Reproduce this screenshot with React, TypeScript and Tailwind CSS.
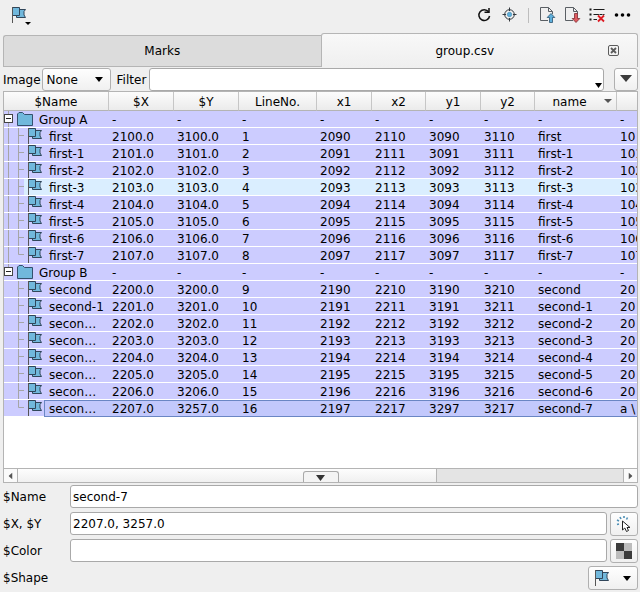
import { useState } from 'react';
import clsx from 'clsx';

type Mark = {
  name: string;
  cells: string[];
  state?: 'hover' | 'current';
};

type Group = {
  name: string;
  marks: Mark[];
};

const columns = [
  { label: '$Name', width: 'w-[105px]' },
  { label: '$X', width: 'w-[65px]' },
  { label: '$Y', width: 'w-[65px]' },
  { label: 'LineNo.', width: 'w-[78px]' },
  { label: 'x1', width: 'w-[55px]' },
  { label: 'x2', width: 'w-[54px]' },
  { label: 'y1', width: 'w-[55px]' },
  { label: 'y2', width: 'w-[54px]' },
  { label: 'name', width: 'w-[82px]', sorted: true },
  { label: '', width: '' },
];

const groups: Group[] = [
  {
    name: 'Group A',
    marks: [
      { name: 'first', cells: ['2100.0', '3100.0', '1', '2090', '2110', '3090', '3110', 'first', '10'] },
      { name: 'first-1', cells: ['2101.0', '3101.0', '2', '2091', '2111', '3091', '3111', 'first-1', '101'] },
      { name: 'first-2', cells: ['2102.0', '3102.0', '3', '2092', '2112', '3092', '3112', 'first-2', '102'] },
      { name: 'first-3', cells: ['2103.0', '3103.0', '4', '2093', '2113', '3093', '3113', 'first-3', '103'], state: 'hover' },
      { name: 'first-4', cells: ['2104.0', '3104.0', '5', '2094', '2114', '3094', '3114', 'first-4', '104'] },
      { name: 'first-5', cells: ['2105.0', '3105.0', '6', '2095', '2115', '3095', '3115', 'first-5', '105'] },
      { name: 'first-6', cells: ['2106.0', '3106.0', '7', '2096', '2116', '3096', '3116', 'first-6', '106'] },
      { name: 'first-7', cells: ['2107.0', '3107.0', '8', '2097', '2117', '3097', '3117', 'first-7', '107'] },
    ],
  },
  {
    name: 'Group B',
    marks: [
      { name: 'second', cells: ['2200.0', '3200.0', '9', '2190', '2210', '3190', '3210', 'second', '20'] },
      { name: 'second-1', cells: ['2201.0', '3201.0', '10', '2191', '2211', '3191', '3211', 'second-1', '20'] },
      { name: 'secon…', cells: ['2202.0', '3202.0', '11', '2192', '2212', '3192', '3212', 'second-2', '20'] },
      { name: 'secon…', cells: ['2203.0', '3203.0', '12', '2193', '2213', '3193', '3213', 'second-3', '20'] },
      { name: 'secon…', cells: ['2204.0', '3204.0', '13', '2194', '2214', '3194', '3214', 'second-4', '20'] },
      { name: 'secon…', cells: ['2205.0', '3205.0', '14', '2195', '2215', '3195', '3215', 'second-5', '20'] },
      { name: 'secon…', cells: ['2206.0', '3206.0', '15', '2196', '2216', '3196', '3216', 'second-6', '20'] },
      { name: 'secon…', cells: ['2207.0', '3257.0', '16', '2197', '2217', '3297', '3217', 'second-7', 'a \\'], state: 'current' },
    ],
  },
];

const inputClass =
  'h-[23px] min-w-0 flex-1 rounded-[3px] border border-[#a9a9a9] bg-white px-[2px] pt-px outline-none';
const buttonClass =
  'flex shrink-0 items-center justify-center rounded-[3px] border border-[#b0b0b0] bg-linear-to-b from-[#fefefe] to-[#f0f0f0]';

function FlagIcon() {
  return (
    <svg width="16" height="16" viewBox="0 0 16 16" className="block shrink-0" stroke="#31465a" aria-hidden="true">
      <path d="M4.5 2.5H13.5L12 4.5V8L13.5 10.5H4.5Z" fill="#71b8dc" />
      <path d="M0.5 0.5H7.5V8.5H0.5Z" fill="#71b8dc" />
      <path d="M0.5 0V16" fill="none" stroke="#555" />
    </svg>
  );
}

function FolderIcon() {
  return (
    <svg width="17" height="16" viewBox="0 0 17 16" className="block shrink-0" aria-hidden="true">
      <path d="M0.5 14.5V3L2 1.5H5.5L7.5 3.5H15.5V14.5Z" fill="#71b8dc" stroke="#35506e" strokeLinejoin="round" />
    </svg>
  );
}

function Arrow({ className, width = 9, height = 5 }: { className?: string; width?: number; height?: number }) {
  return (
    <svg width={width} height={height} viewBox="0 0 10 6" preserveAspectRatio="none" className={clsx('block shrink-0', className)} aria-hidden="true">
      <path d="M0 0H10L5 6Z" fill="currentColor" />
    </svg>
  );
}

function DocumentIcon({ direction }: { direction: 'up' | 'down' }) {
  return (
    <svg width="16" height="16" viewBox="0 0 16 16" className="block" aria-hidden="true">
      <path d="M8 13.5H0.5V0.5H8.5L12.5 4.5V7M8.5 0.5V4.5H12.5" fill="none" stroke="#5a5f64" />
      {direction === 'up' ? (
        <path d="M11 6.5L14.8 10.5H12.5V15.5H9.5V10.5H7.2Z" fill="#5fb0dc" stroke="#2c5470" strokeWidth="0.8" />
      ) : (
        <path d="M11 15.5L14.8 11.5H12.5V6.5H9.5V11.5H7.2Z" fill="#de5a5f" stroke="#7c2a30" strokeWidth="0.8" />
      )}
    </svg>
  );
}

function Toolbar() {
  return (
    <div className="flex h-[33px] shrink-0 items-start pt-[7px] pr-[9px] pl-3">
      <button aria-label="Mark shape" className="flex items-end">
        <FlagIcon />
        <Arrow width={6} height={3} className="-mb-[2px] -ml-[3px]" />
      </button>
      <div className="ml-auto flex items-center">
        <button aria-label="Reload">
          <svg width="16" height="16" viewBox="0 0 16 16" className="block" fill="none" stroke="#111" strokeWidth="1.5">
            <path d="M12.6 4.8A5.4 5.4 0 1 0 13.6 9" />
            <path d="M8.5 5.2H13V1" />
          </svg>
        </button>
        <button aria-label="Center" className="ml-[9px]">
          <svg width="16" height="16" viewBox="0 0 16 16" className="block" fill="none" stroke="#31363b">
            <circle cx="8.5" cy="7.5" r="4.8" />
            <circle cx="8.5" cy="7.5" r="2.2" fill="#5fb0dc" stroke="#3c83aa" strokeWidth="0.6" />
            <path d="M8.5 0.5V4M8.5 11V14.5M1.5 7.5H5M12 7.5H15.5" />
          </svg>
        </button>
        <span className="ml-[11px] h-[15px] w-px bg-[#bdbdbd]" />
        <button aria-label="Open file" className="ml-[11px]">
          <DocumentIcon direction="up" />
        </button>
        <button aria-label="Save file" className="ml-[9px]">
          <DocumentIcon direction="down" />
        </button>
        <button aria-label="Clear list" className="ml-2">
          <svg width="16" height="16" viewBox="0 0 16 16" className="block" fill="none" stroke="#1b1b1b">
            <path d="M0.5 2.5H2.5M0.5 7.5H2.5M0.5 12.5H2.5" strokeWidth="2" />
            <path d="M4.5 2.5H15.5M4.5 7.5H15.5M4.5 12.5H8" strokeWidth="1.2" />
            <path d="M9 8.5L15 14.5M15 8.5L9 14.5" stroke="#efefef" strokeWidth="3.6" />
            <path d="M9 8.5L15 14.5M15 8.5L9 14.5" stroke="#dd1c24" strokeWidth="1.8" />
          </svg>
        </button>
        <button aria-label="More" className="ml-[9px]">
          <svg width="17" height="16" viewBox="0 0 17 16" className="block">
            <circle cx="2.5" cy="8" r="1.8" />
            <circle cx="8.5" cy="8" r="1.8" />
            <circle cx="14.5" cy="8" r="1.8" />
          </svg>
        </button>
      </div>
    </div>
  );
}

function Tabs() {
  return (
    <div role="tablist" className="mr-[2px] ml-[3px] grid h-[34px] shrink-0 grid-cols-2 items-end">
      <button
        role="tab"
        aria-selected="false"
        className="h-8 rounded-tl-[3px] border border-r-0 border-[#b5b5b5] bg-[#dcdcdc]"
      >
        Marks
      </button>
      <div className="flex h-[34px] items-center rounded-t-[3px] border border-b-0 border-[#b5b5b5] bg-linear-to-b from-[#f8f8f8] to-[#efefef] pr-[17px]">
        <button role="tab" aria-selected="true" className="flex-1">
          group.csv
        </button>
        <button aria-label="Close tab">
          <svg width="12" height="12" viewBox="0 0 12 12" className="block" fill="none" stroke="#5c5c5c">
            <rect x="0.5" y="0.5" width="10" height="10" rx="1.5" />
            <path d="M3 3L8 8M8 3L3 8" strokeWidth="1.8" />
          </svg>
        </button>
      </div>
    </div>
  );
}

function FilterBar() {
  const [filter, setFilter] = useState('');

  return (
    <div className="mt-px mr-[2px] ml-[3px] flex h-[23px] shrink-0 items-start">
      <label htmlFor="image" className="leading-6">
        Image
      </label>
      <div className="relative ml-px flex">
        <select
          id="image"
          className="h-[23px] w-[69px] appearance-none rounded-[3px] border border-[#b0b0b0] bg-linear-to-b from-[#fefefe] to-[#f0f0f0] pl-1 outline-none"
        >
          <option>None</option>
        </select>
        <Arrow width={8} className="pointer-events-none absolute top-[9px] right-2" />
      </div>
      <label htmlFor="filter" className="ml-[6px] leading-6">
        Filter
      </label>
      <div className="relative ml-[3px] flex flex-1">
        <input id="filter" className={inputClass} value={filter} onChange={(evt) => setFilter(evt.target.value)} />
        <Arrow width={7} className="absolute right-[2px] bottom-[3px]" />
      </div>
      <button aria-label="Filter options" className={clsx(buttonClass, 'ml-[10px] h-[23px] w-6')}>
        <Arrow width={12} height={7} className="-mt-[2px] text-[#3c3c3c]" />
      </button>
    </div>
  );
}

function MarkTable() {
  return (
    <table className="w-full table-fixed border-separate border-spacing-0">
      <thead>
        <tr className="bg-linear-to-b from-[#fcfcfc] to-[#eaeaea]">
          {columns.map((column) => (
            <th
              key={column.label}
              className={clsx(
                'relative h-[19px] border-b border-[#b4b4b4] px-0 pt-[3px] pb-px leading-[14px] font-normal',
                column.width,
                column.label && 'border-r border-r-[#c6c6c6]'
              )}
            >
              <span className={clsx(column.sorted && 'mr-3')}>{column.label}</span>
              {column.sorted && <Arrow width={8} height={4} className="absolute top-[7px] right-1 text-[#555]" />}
            </th>
          ))}
        </tr>
      </thead>
      {groups.map((group, groupIndex) => (
        <tbody key={group.name}>
          <tr className="bg-[#ccccff]">
            <td className="h-[17px] border-b border-white p-0">
              <div className="flex h-4">
                <svg width="13" height="16" viewBox="0 0 13 16" className="block shrink-0" fill="none">
                  <path d={groupIndex === 0 ? 'M4.5 0V16' : 'M4.5 0V4'} stroke="#a5a5a5" />
                  <rect x="0.5" y="3.5" width="8" height="8" fill="#fff" stroke="#444" />
                  <path d="M2 7.5H7" stroke="#222" />
                </svg>
                <FolderIcon />
                <span className="ml-[5px] leading-[18px] whitespace-nowrap">{group.name}</span>
              </div>
            </td>
            {columns.slice(1).map((column) => (
              <td key={column.label} className="border-b border-white pt-[2px] pr-0 pb-0 pl-[3px] leading-[14px]">
                -
              </td>
            ))}
          </tr>
          {group.marks.map((mark, index) => {
            const last = index === group.marks.length - 1;
            const current = mark.state === 'current';
            return (
              <tr key={mark.cells[2]} className="bg-[#ccccff]">
                <td className="h-[17px] border-b border-white p-0">
                  <div className="flex h-4">
                    <svg width="20" height="16" viewBox="0 0 20 16" className="block shrink-0" fill="none" stroke="#a5a5a5">
                      {groupIndex === 0 && <path d="M4.5 0V16" />}
                      <path d={last ? 'M14.5 0V7.5H20' : 'M14.5 0V16M14.5 7.5H20'} />
                    </svg>
                    <div className={clsx('flex flex-1 pl-1', mark.state === 'hover' && 'bg-[#daeeff]')}>
                      <FlagIcon />
                      <span
                        className={clsx(
                          'flex-1 border-l pl-1 leading-[18px] whitespace-nowrap',
                          current ? 'border-[#6a86c4] bg-[#c2c8fc] shadow-[inset_0_1px_0_#6a86c4,0_1px_0_#6a86c4]' : 'border-transparent'
                        )}
                      >
                        {mark.name}
                      </span>
                    </div>
                  </div>
                </td>
                {mark.cells.map((cell, cellIndex) => (
                  <td
                    key={cellIndex}
                    className={clsx(
                      'overflow-hidden border-b pt-[2px] pr-0 pb-0 pl-[3px] leading-[14px] whitespace-nowrap',
                      current ? 'border-[#6a86c4] bg-[#c2c8fc] shadow-[inset_0_1px_0_#6a86c4]' : 'border-white',
                      mark.state === 'hover' && 'bg-[#daeeff]'
                    )}
                  >
                    {cell}
                  </td>
                ))}
              </tr>
            );
          })}
        </tbody>
      ))}
    </table>
  );
}

function ScrollBar() {
  return (
    <div className="relative flex h-[14px] shrink-0 border-t border-[#b4b4b4] bg-[#e4e4e4]">
      <button aria-label="Scroll left" className="flex w-[14px] items-center justify-center border-r border-[#b4b4b4] bg-[#fafafa]">
        <Arrow width={7} height={4} className="rotate-90 text-[#555]" />
      </button>
      <div className="flex flex-1">
        <div className="flex-9 border-r border-[#b4b4b4] bg-linear-to-b from-[#fdfdfd] to-[#f0f0f0]" />
        <div className="flex-4" />
      </div>
      <button aria-label="Scroll right" className="flex w-[14px] items-center justify-center border-l border-[#b4b4b4] bg-[#fafafa]">
        <Arrow width={7} height={4} className="-rotate-90 text-[#555]" />
      </button>
      <button
        aria-label="Hide details"
        className="absolute -bottom-px left-1/2 flex h-3 w-9 -translate-x-1/2 items-center justify-center rounded-t-[3px] border border-b-0 border-[#a9a9a9] bg-[#f4f4f4]"
      >
        <Arrow width={9} height={6} className="text-[#333]" />
      </button>
    </div>
  );
}

function DetailsForm() {
  const [name, setName] = useState('second-7');
  const [position, setPosition] = useState('2207.0, 3257.0');
  const [color, setColor] = useState('');

  return (
    <form className="mt-[2px] mr-[2px] ml-[3px] flex shrink-0 flex-col gap-[3px] pb-[2px]" onSubmit={(evt) => evt.preventDefault()}>
      <div className="flex h-6">
        <label htmlFor="name" className="w-[67px] leading-6">
          $Name
        </label>
        <input id="name" className={inputClass} value={name} onChange={(evt) => setName(evt.target.value)} />
      </div>
      <div className="flex h-6">
        <label htmlFor="position" className="w-[67px] leading-6">
          $X, $Y
        </label>
        <input id="position" className={inputClass} value={position} onChange={(evt) => setPosition(evt.target.value)} />
        <button aria-label="Pick position" className={clsx(buttonClass, 'ml-[3px] h-6 w-7')}>
          <svg width="16" height="16" viewBox="0 0 16 16" fill="none">
            <path d="M1 8.5L3 8M1 4L3 5M4 1L5 3M8 0V2M11.5 1.5L10.5 3.5" stroke="#4d8fb5" strokeWidth="1.6" />
            <path d="M6.5 5V14L8.8 12L10.5 15.5L12.5 14.5L11 11.5H14Z" fill="#fff" stroke="#222" />
          </svg>
        </button>
      </div>
      <div className="flex h-6">
        <label htmlFor="color" className="w-[67px] leading-6">
          $Color
        </label>
        <input id="color" className={inputClass} value={color} onChange={(evt) => setColor(evt.target.value)} />
        <button aria-label="Pick color" className={clsx(buttonClass, 'ml-[3px] h-6 w-7')}>
          <svg width="16" height="16" viewBox="0 0 16 16">
            <path d="M0 0H16V16H0Z" fill="#bdbdbd" />
            <path d="M0 0H8V8H16V16H8V8H0Z" fill="#3c3c3c" />
          </svg>
        </button>
      </div>
      <div className="flex h-6">
        <label htmlFor="shape" className="w-[67px] leading-6">
          $Shape
        </label>
        <button id="shape" className={clsx(buttonClass, 'ml-auto h-6 w-[50px] gap-3')}>
          <FlagIcon />
          <Arrow width={8} height={5} />
        </button>
      </div>
    </form>
  );
}

export default function App() {
  return (
    <div className="flex min-h-screen flex-col bg-[#efefef] font-['DejaVu_Sans',sans-serif] text-[12px] leading-4 text-black">
      <Toolbar />
      <Tabs />
      <FilterBar />
      <div className="mr-[2px] ml-[3px] flex flex-1 flex-col overflow-hidden border border-[#b4b4b4] bg-white">
        <div className="flex-1 overflow-hidden">
          <MarkTable />
        </div>
        <ScrollBar />
      </div>
      <DetailsForm />
    </div>
  );
}
